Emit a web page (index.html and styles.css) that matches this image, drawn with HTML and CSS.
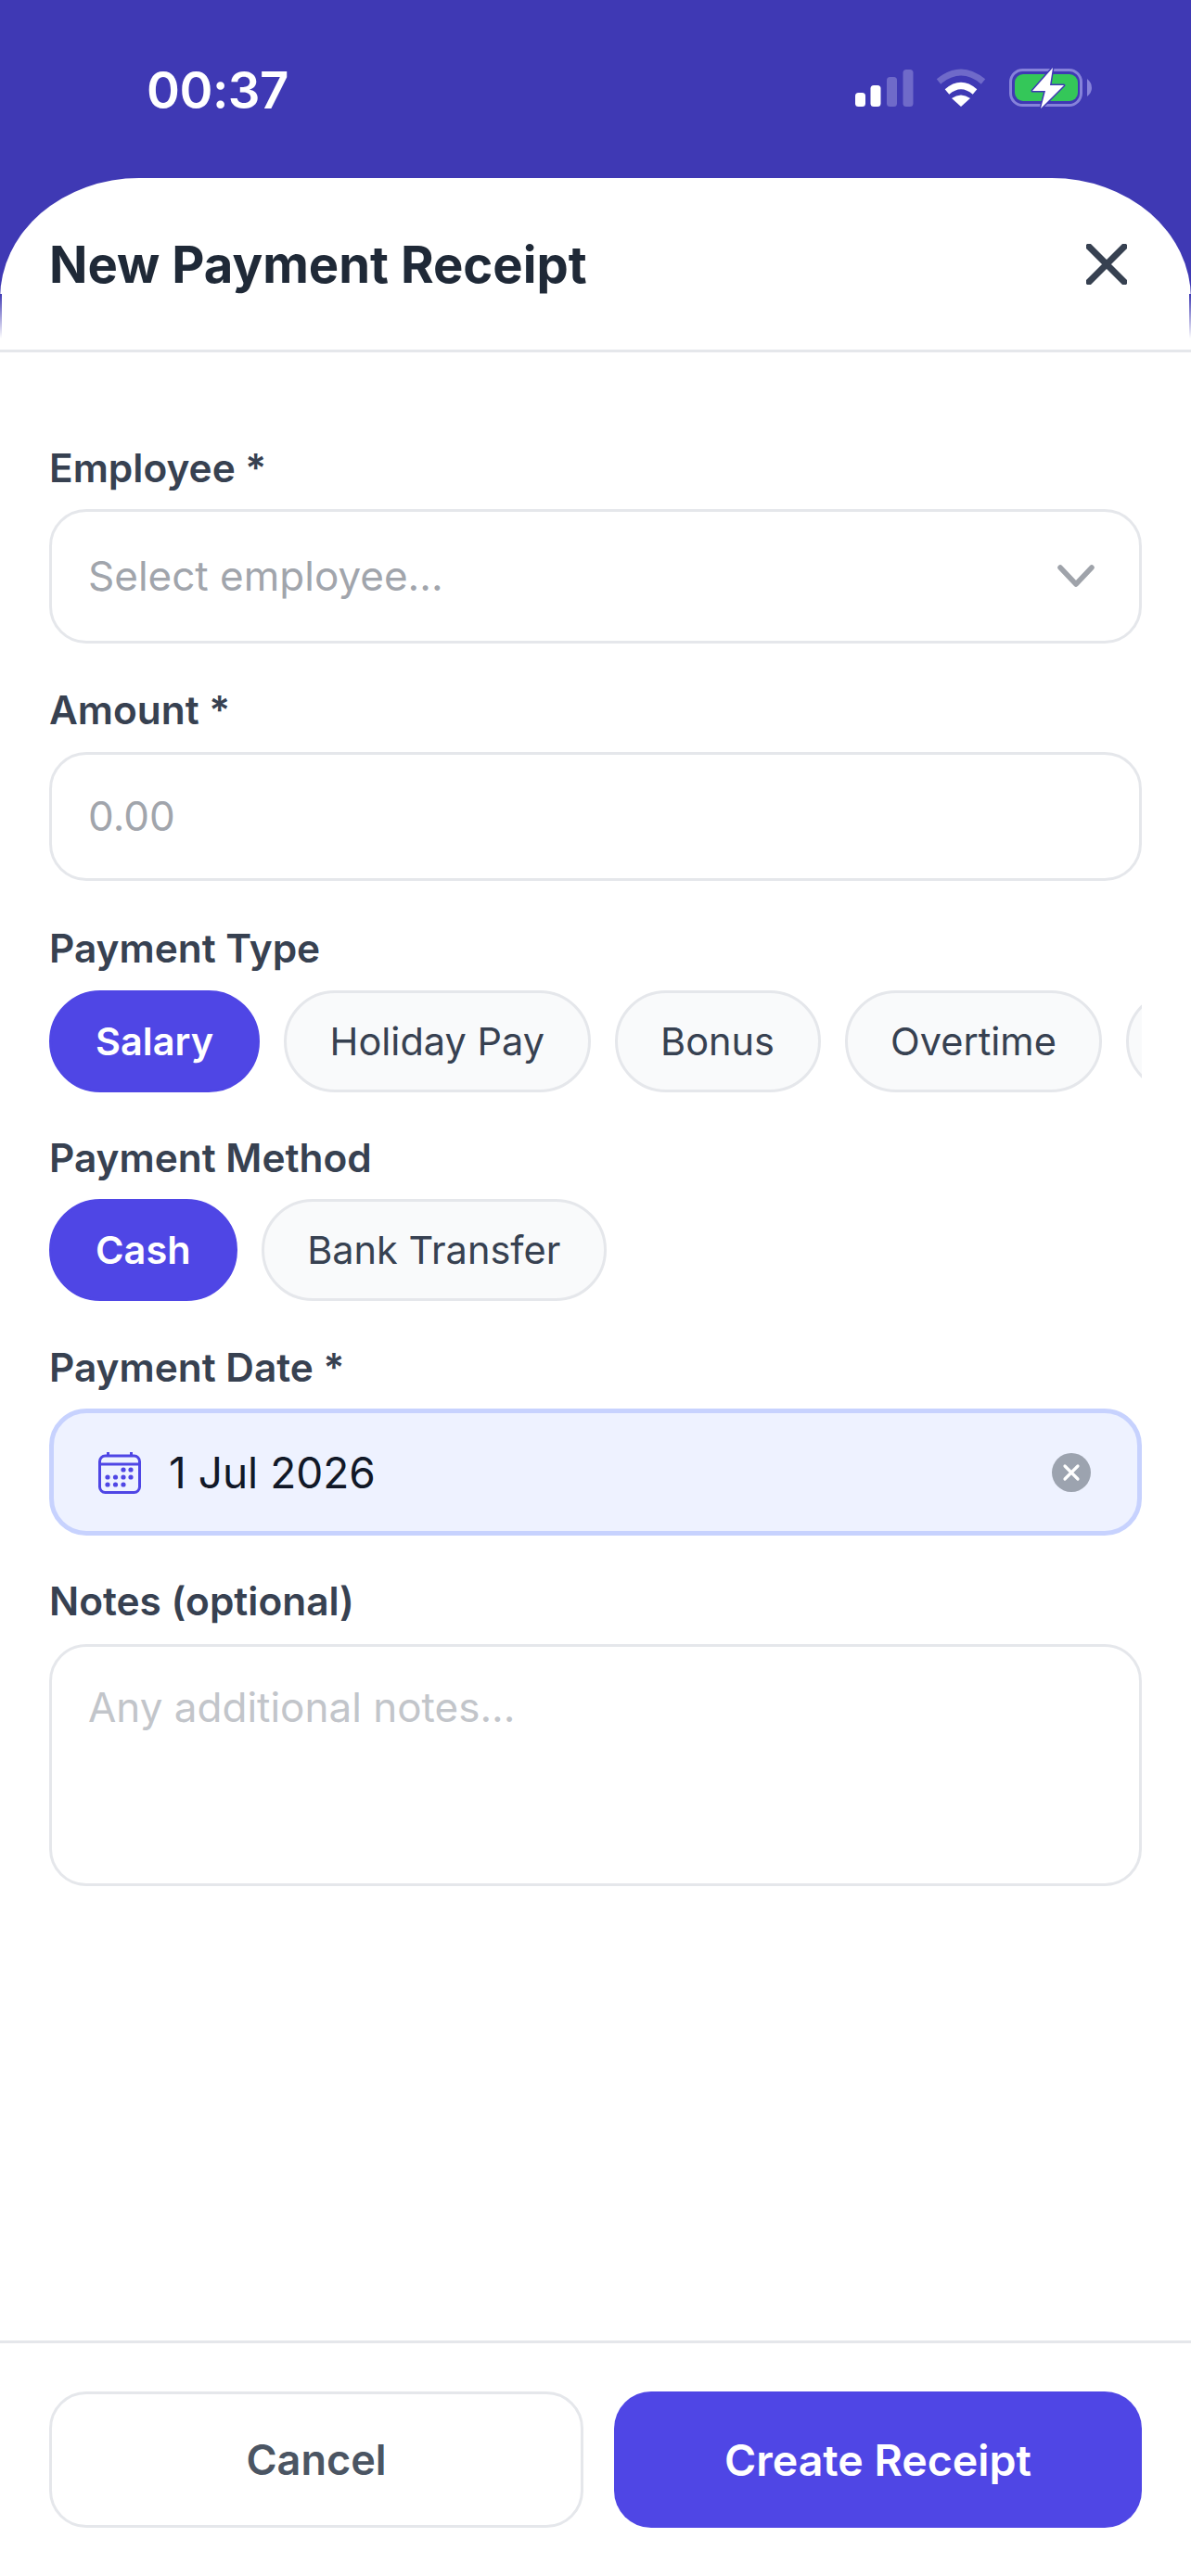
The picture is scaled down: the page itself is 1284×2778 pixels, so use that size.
FILE: index.html
```html
<!DOCTYPE html>
<html lang="en">
<head>
<meta charset="utf-8">
<title>New Payment Receipt</title>
<link rel="stylesheet" href="styles.css">
</head>
<body>
<div class="screen">
  <div class="status">
    <span class="time">00:37</span>
    <svg class="status-icons" viewBox="920 70 260 50" width="260" height="50">
      <rect x="922" y="100" width="11" height="15" rx="3.5" fill="#fff"/>
      <rect x="938.5" y="92" width="11" height="23" rx="3.5" fill="#fff"/>
      <rect x="956" y="83" width="11" height="32" rx="3.5" fill="#6f6ac9"/>
      <rect x="973.5" y="75" width="11" height="40" rx="3.5" fill="#6f6ac9"/>
      <path d="M1012 88 Q1036 68 1060 88" fill="none" stroke="#6f6ac9" stroke-width="7"/>
      <path d="M1021 99 Q1036 86 1051 99" fill="none" stroke="#fff" stroke-width="7"/>
      <path d="M1036 115 L1026 106 Q1036 99 1046 106 Z" fill="#fff"/>
      <rect x="1089.5" y="75.5" width="76" height="38" rx="13" fill="none" stroke="#8682da" stroke-width="3"/>
      <rect x="1094" y="80" width="68" height="29" rx="9" fill="#34c759"/>
      <path d="M1172 85 Q1177 89 1177 95 Q1177 100 1172 104 Z" fill="#8682da"/>
      <path d="M1135 73 L1113 98 L1127 98 L1122 117 L1147 92 L1132 92 Z" fill="#fff" stroke="#3f39b4" stroke-width="3" paint-order="stroke" stroke-linejoin="round"/>
    </svg>
  </div>
  <div class="sheet">
    <header class="sheet-head">
      <h1 class="title">New Payment Receipt</h1>
      <svg class="close" viewBox="0 0 44 44" width="44" height="44"><path d="M3 3 L41 41 M41 3 L3 41" fill="none" stroke="#374151" stroke-width="7" stroke-linecap="round"/></svg>
    </header>
    <main class="form">
      <label class="label label-first">Employee *</label>
      <div class="field field-select">
        <span class="placeholder">Select employee...</span>
        <svg viewBox="0 0 40 26" width="40" height="26"><path d="M3 4 L20 22 L37 4" fill="none" stroke="#9fa3aa" stroke-width="5.5" stroke-linecap="round" stroke-linejoin="round"/></svg>
      </div>
      <label class="label label-amount">Amount *</label>
      <div class="field field-amount"><span class="placeholder">0.00</span></div>
      <label class="label label-type">Payment Type</label>
      <div class="pills">
        <span class="pill pill-on">Salary</span>
        <span class="pill">Holiday Pay</span>
        <span class="pill">Bonus</span>
        <span class="pill">Overtime</span>
        <span class="pill pill-clipped"></span>
      </div>
      <label class="label label-method">Payment Method</label>
      <div class="pills">
        <span class="pill pill-on">Cash</span>
        <span class="pill">Bank Transfer</span>
      </div>
      <label class="label label-date">Payment Date *</label>
      <div class="field field-date">
        <svg class="cal" viewBox="0 0 46 46" width="46" height="46">
          <rect x="1.5" y="5" width="43" height="39.5" rx="6" fill="none" stroke="#4f46e5" stroke-width="3"/>
          <path d="M1.5 14 H44.5 M10.5 1 V6 M35.5 1 V6" fill="none" stroke="#4f46e5" stroke-width="3"/>
          <g fill="#4f46e5">
            <circle cx="27" cy="20" r="2.6"/><circle cx="35" cy="20" r="2.6"/>
            <circle cx="10" cy="28" r="2.6"/><circle cx="18.5" cy="28" r="2.6"/><circle cx="27" cy="28" r="2.6"/><circle cx="35" cy="28" r="2.6"/>
            <circle cx="10" cy="36" r="2.6"/><circle cx="18.5" cy="36" r="2.6"/><circle cx="27" cy="36" r="2.6"/>
          </g>
        </svg>
        <span class="date-value">1 Jul 2026</span>
        <svg class="clear" viewBox="0 0 42 42" width="42" height="42"><circle cx="21" cy="21" r="21" fill="#9ca3af"/><path d="M14 14 L28 28 M28 14 L14 28" stroke="#fff" stroke-width="3.2" stroke-linecap="round"/></svg>
      </div>
      <label class="label label-notes">Notes (optional)</label>
      <div class="field field-notes"><span class="placeholder placeholder-light">Any additional notes...</span></div>
    </main>
    <footer class="foot">
      <button class="btn btn-cancel">Cancel</button>
      <button class="btn btn-create">Create Receipt</button>
    </footer>
  </div>
</div>
</body>
</html>
```
FILE: styles.css
```css
* { box-sizing: border-box; }
html, body { margin: 0; padding: 0; }
body { font-family: Inter, "Liberation Sans", sans-serif; background: #3f39b4; }
.screen { width: 1284px; height: 2778px; display: flex; flex-direction: column; overflow: hidden; background: #3f39b4; }

.status { height: 192px; flex: none; display: flex; align-items: flex-start; justify-content: space-between; padding: 70px 104px 0 158px; color: #fff; }
.time { font-size: 54.5px; font-weight: 600; line-height: 54px; letter-spacing: -0.5px; }
.status-icons { display: block; }

.sheet { flex: 1; display: flex; flex-direction: column; background: #fff; border-radius: 150px 150px 0 0 / 130px 130px 0 0; }
.sheet-head {
  height: 188px; flex: none; display: flex; align-items: center; justify-content: space-between;
  padding: 0 69px 0 53px; border-bottom: 3px solid #e5e7eb;
  background-image: linear-gradient(#3f39b4, #fff), linear-gradient(#3f39b4, #fff);
  background-size: 2px 48px, 2px 48px;
  background-position: left 0 top 125px, right 0 top 125px;
  background-repeat: no-repeat;
}
.title { margin: 0; font-size: 54.4px; font-weight: 700; color: #1f2937; line-height: 64px; }

.form { flex: 1; padding: 0 53px; }
.label { display: block; font-size: 42.4px; font-weight: 600; color: #374151; line-height: 50px; }
.label-first { margin-top: 100px; margin-bottom: 19px; }
.label-amount { margin-top: 47px; margin-bottom: 20px; }
.label-type { margin-top: 48px; margin-bottom: 20px; }
.label-method { margin-top: 46px; margin-bottom: 19px; }
.label-date { margin-top: 47px; margin-bottom: 19px; }
.label-notes { margin-top: 46px; margin-bottom: 21px; }

.field { display: flex; align-items: center; border: 3px solid #e5e7eb; border-radius: 40px; padding: 0 39px; background: #fff; font-size: 44px; }
.field-select { height: 145px; justify-content: space-between; padding-right: 48px; padding-bottom: 2px; }
.field-amount { height: 139px; padding-bottom: 2px; }
.field-date { height: 137px; background: #eef2ff; border: 5px solid #c7d2fe; padding: 0 50px 0 48px; }
.field-notes { height: 261px; align-items: flex-start; padding-top: 38px; }
.placeholder { color: #a1a5ac; line-height: 54px; }
.placeholder-light { color: #c2c5ca; }
.date-value { flex: 1; margin-left: 30px; font-size: 46px; font-weight: 400; color: #111827; }
.cal, .clear { flex: none; }

.pills { display: flex; gap: 26px; overflow: hidden; height: 110px; }
.pill { flex: none; display: flex; align-items: center; height: 110px; padding: 0 46.5px; border: 3px solid #e5e7eb; border-radius: 55px; background: #f9fafb; font-size: 41.5px; color: #374151; }
.pill-on { background: #4f46e5; border-color: #4f46e5; color: #fff; font-weight: 600; padding: 0 47px; }
.pill-clipped { width: 180px; }

.foot { height: 254px; flex: none; display: flex; gap: 33px; padding: 52px 53px 0; border-top: 3px solid #e5e7eb; }
.btn { height: 147px; border-radius: 40px; font-family: inherit; font-weight: 600; padding: 0; }
.btn-cancel { width: 576px; background: #fff; border: 3px solid #e5e7eb; color: #4b5563; font-size: 45px; }
.btn-create { flex: 1; background: #4f46e5; border: 0; color: #fff; font-size: 46.5px; }
```
